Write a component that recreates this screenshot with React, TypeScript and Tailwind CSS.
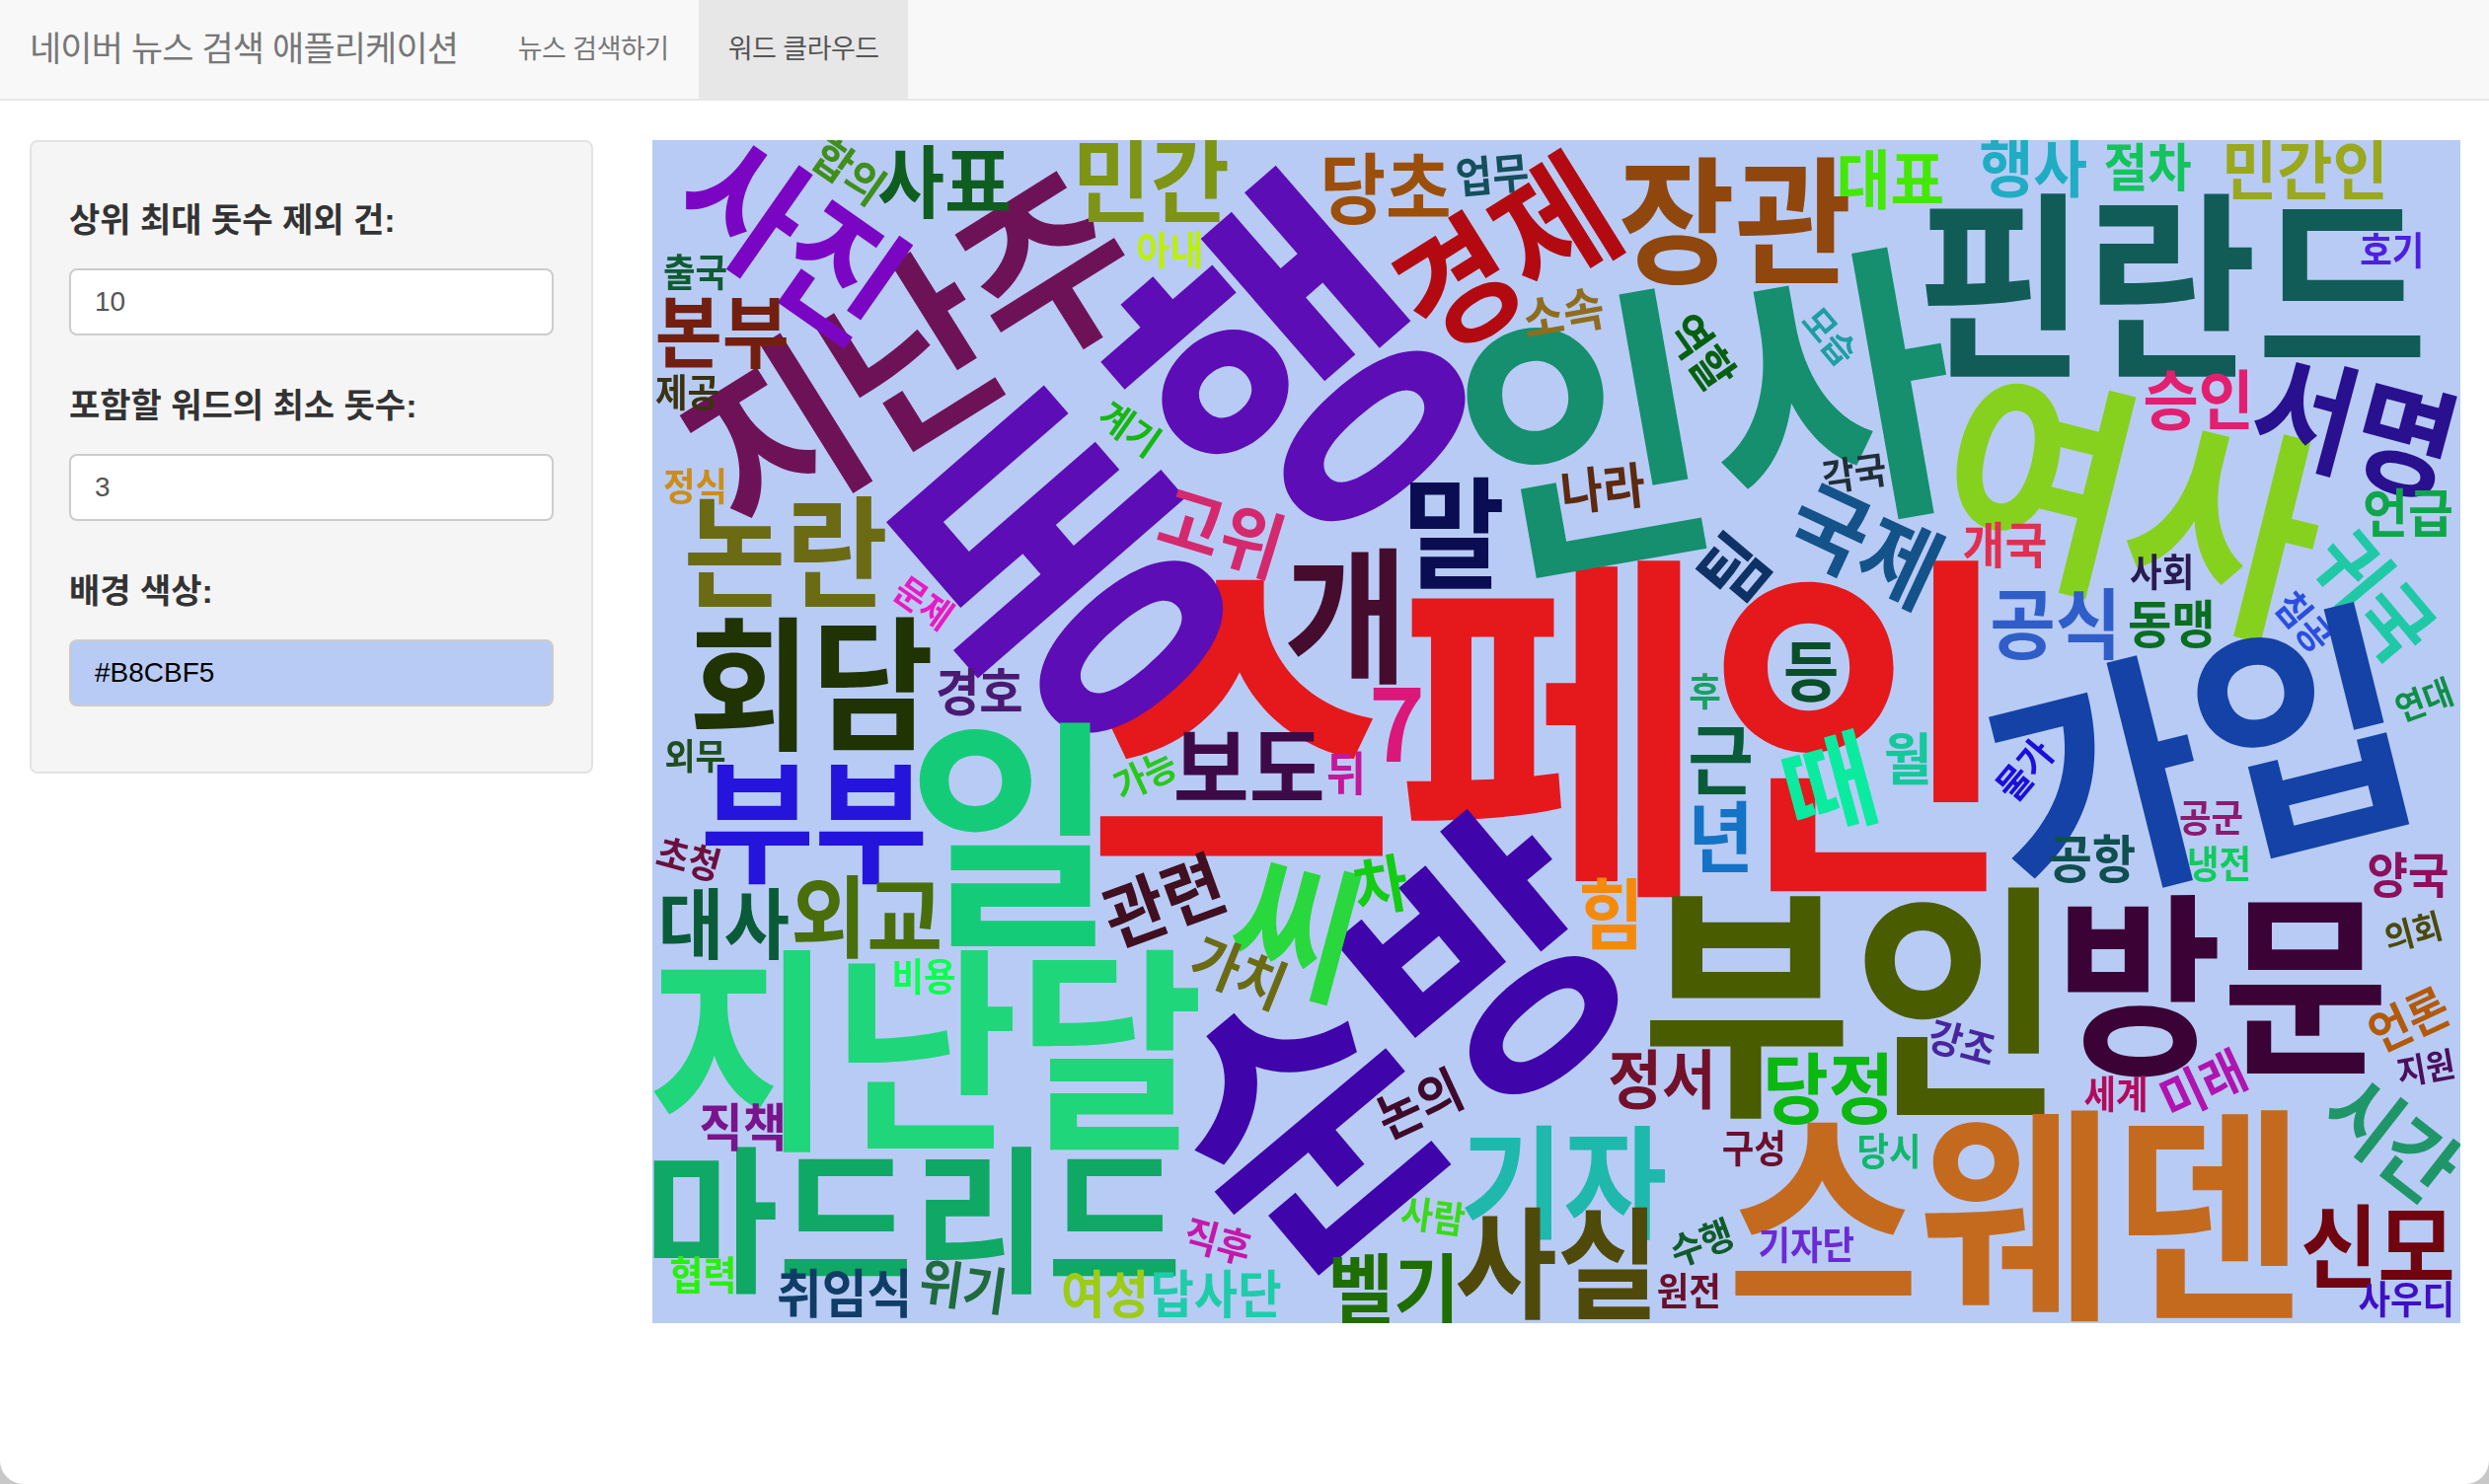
const k = 1.6084;

type Word = [string, number, number, number, number, string];

const words: Word[] = [
  ['스페인', 977, 456, 212, 0, '#e5181c'],
  ['동행', 740, 293, 207, -41, '#5c0db5'],
  ['인사', 1075, 260, 170, -10, '#158f6e'],
  ['핀란드', 1368, 179, 117, 0, '#115c57'],
  ['여사', 1343, 316, 131, 14, '#86d11e'],
  ['지난주', 573, 222, 110, -32, '#6e1257'],
  ['사진', 500, 149, 80, 35, '#7a06c4'],
  ['합의', 535, 108, 26, 35, '#3f8f1a'],
  ['사표', 595, 114, 46, 0, '#0f5e1f'],
  ['민간', 725, 113, 54, 0, '#7d9414'],
  ['당초', 873, 119, 45, 0, '#9c4f0a'],
  ['업무', 940, 110, 25, -5, '#144f5c'],
  ['경제', 948, 160, 78, -32, '#b30a12'],
  ['장관', 1093, 138, 80, 0, '#8f470d'],
  ['대표', 1191, 113, 37, 0, '#44e806'],
  ['행사', 1281, 106, 37, 0, '#20adc4'],
  ['절차', 1353, 105, 30, 0, '#12c45c'],
  ['민간인', 1452, 107, 38, 0, '#9aa81c'],
  ['호기', 1507, 157, 22, 0, '#4d1fe0'],
  ['아내', 737, 157, 23, 0, '#bcef0a'],
  ['출국', 438, 171, 22, 0, '#0f5c33'],
  ['본부', 455, 208, 46, 0, '#731f0f'],
  ['제공', 433, 247, 22, 0, '#3b3310'],
  ['소속', 985, 197, 28, -10, '#8f6d1c'],
  ['역할', 1072, 222, 27, 55, '#06600f'],
  ['모습', 1153, 212, 21, 50, '#1f9ea0'],
  ['승인', 1385, 252, 38, 0, '#e31f70'],
  ['서명', 1484, 268, 70, 15, '#28108f'],
  ['언급', 1517, 323, 31, 0, '#0fa64a'],
  ['귀국', 1495, 375, 47, 50, '#1fc9a6'],
  ['개국', 1263, 343, 29, 0, '#e03050'],
  ['각국', 1168, 298, 22, -8, '#1f2e38'],
  ['나라', 1010, 308, 29, -6, '#5c2a0f'],
  ['국제', 1175, 343, 53, 25, '#14528a'],
  ['팀', 1092, 358, 42, -50, '#0e3266'],
  ['사회', 1362, 360, 22, 0, '#291a52'],
  ['공식', 1295, 393, 45, 0, '#2f5ec9'],
  ['동맹', 1368, 393, 30, 0, '#0a6e20'],
  ['침공', 1452, 392, 22, 50, '#2a4ee0'],
  ['연대', 1527, 441, 20, -20, '#0f8f45'],
  ['가입', 1385, 477, 146, -14, '#1442a6'],
  ['등', 1141, 423, 38, 0, '#0a4f2a'],
  ['후', 1074, 435, 22, 0, '#199f64'],
  ['말', 916, 335, 70, 0, '#0a0d52'],
  ['개', 848, 387, 85, 0, '#450c2d'],
  ['고위', 770, 335, 43, 17, '#d42a6d'],
  ['계기', 712, 270, 22, 35, '#14b80e'],
  ['정식', 438, 306, 22, 0, '#cc8d1a'],
  ['논란', 495, 347, 70, 0, '#6b6b14'],
  ['문제', 582, 380, 21, 35, '#e81ac4'],
  ['회담', 511, 430, 84, 0, '#1f3303'],
  ['경호', 617, 436, 30, 0, '#4a1a73'],
  ['7', 880, 455, 60, 0, '#d9187a'],
  ['외무', 438, 476, 21, 0, '#1f4d1f'],
  ['부부', 513, 517, 78, 0, '#2414dc'],
  ['일', 637, 525, 142, 0, '#14cc78'],
  ['보도', 787, 483, 52, 0, '#3d0a47'],
  ['뒤', 848, 487, 27, 0, '#c4189a'],
  ['가능', 721, 488, 22, -25, '#28c81a'],
  ['근', 1084, 478, 45, 0, '#0a5c38'],
  ['년', 1084, 527, 45, 0, '#1473c4'],
  ['때', 1152, 494, 62, -15, '#0aeb9f'],
  ['월', 1202, 477, 33, 0, '#14c89a'],
  ['물가', 1275, 485, 22, -50, '#1a0fdc'],
  ['공군', 1393, 515, 22, 0, '#8c1a6e'],
  ['냉전', 1398, 544, 22, 0, '#0fcc5c'],
  ['공항', 1318, 541, 30, 0, '#0f4f4f'],
  ['양국', 1517, 551, 28, 0, '#8c0f5c'],
  ['의회', 1520, 587, 20, -15, '#4a4a0a'],
  ['언론', 1517, 642, 28, -25, '#b35a0a'],
  ['지원', 1528, 673, 20, -10, '#4a0f5c'],
  ['방문', 1400, 620, 114, 0, '#3b0335'],
  ['부인', 1167, 630, 145, 0, '#4a5c00'],
  ['힘', 1015, 576, 45, 0, '#f58a0a'],
  ['순방', 878, 655, 168, -40, '#3f05ab'],
  ['씨', 817, 583, 85, 15, '#28d83c'],
  ['차', 870, 558, 37, -10, '#14cc14'],
  ['관련', 733, 567, 42, -20, '#400f20'],
  ['가치', 781, 612, 33, 22, '#6b6b14'],
  ['대사', 456, 582, 45, 0, '#0a5c38'],
  ['외교', 546, 577, 52, 0, '#4a6e0a'],
  ['초청', 434, 541, 22, 15, '#6b0f3d'],
  ['비용', 582, 615, 22, 0, '#0aff50'],
  ['지난달', 583, 660, 127, 0, '#1fd67a'],
  ['마드리드', 575, 768, 92, 0, '#0fa864'],
  ['직책', 468, 710, 30, 0, '#7a148c'],
  ['협력', 443, 803, 23, 0, '#28f00a'],
  ['취임식', 532, 815, 31, 0, '#0f3d66'],
  ['위기', 607, 810, 30, 8, '#1f6b3d'],
  ['여성', 696, 815, 30, 0, '#9dcc14'],
  ['답사단', 766, 815, 30, 0, '#1fccaa'],
  ['직후', 767, 782, 23, 15, '#c418aa'],
  ['사람', 903, 766, 22, 8, '#3cd81a'],
  ['논의', 894, 695, 30, -25, '#3f0a2a'],
  ['정서', 1047, 680, 37, 0, '#73102a'],
  ['당정', 1152, 686, 45, 0, '#0ab80f'],
  ['강조', 1236, 657, 23, 15, '#47269e'],
  ['세계', 1333, 689, 22, 0, '#b30a5c'],
  ['미래', 1388, 683, 30, -25, '#b014b0'],
  ['시간', 1507, 717, 48, 38, '#1f9668'],
  ['기자', 985, 745, 71, 0, '#1fb8ad'],
  ['사실', 981, 795, 70, 0, '#4f4a0a'],
  ['벨기', 878, 812, 45, 0, '#1f6e00'],
  ['구성', 1105, 723, 22, 0, '#6b0f2a'],
  ['당시', 1190, 725, 22, 0, '#0fb86b'],
  ['스웨덴', 1270, 764, 132, 0, '#c46a1f'],
  ['신모', 1498, 785, 53, 0, '#70040f'],
  ['사우디', 1516, 818, 22, 0, '#3f0fc4'],
  ['기자단', 1138, 784, 22, 0, '#6b2ad4'],
  ['수행', 1072, 783, 22, -20, '#0f5c2a'],
  ['원전', 1064, 813, 22, 0, '#6b0f2a'],
];

const FONT = 'font-["Helvetica_Neue","Liberation_Sans","Noto_Sans_CJK_KR",sans-serif]';

function Field({ label, value, tinted }: { label: string; value: string; tinted?: boolean }) {
  return (
    <div className="mb-[51px]">
      <div className="mb-[29px] text-[34px] leading-[40px] font-semibold text-[#333]">{label}</div>
      <div
        className={
          tinted
            ? 'flex h-[68px] items-center rounded-[8px] border-2 border-[#ccc] bg-[#b8cbf5] px-[24px] text-[28px] text-black'
            : 'flex h-[68px] items-center rounded-[8px] border-2 border-[#ccc] bg-white px-[24px] text-[28px] text-[#555]'
        }
      >
        {value}
      </div>
    </div>
  );
}

export default function App() {
  return (
    <div className={`h-[1504px] w-[2522px] overflow-hidden bg-[#c8c8c8] ${FONT}`}>
      <div className="flex h-full flex-col rounded-b-[24px] bg-white">
        <nav className="flex h-[102px] shrink-0 border-b-2 border-[#e7e7e7] bg-[#f8f8f8]">
          <div className="flex items-center pl-[30px] pr-[30px] text-[35px] text-[#777] tracking-[-0.85px]">네이버 뉴스 검색 애플리케이션</div>
          <div className="flex w-[214px] items-center justify-center text-[27px] text-[#777] tracking-[-0.5px]">뉴스 검색하기</div>
          <div className="flex w-[212px] items-center justify-center bg-[#e7e7e7] text-[27px] text-[#555] tracking-[-0.5px]">워드 클라우드</div>
        </nav>
        <main className="flex items-start pt-[40px]">
          <aside className="ml-[30px] h-[642px] w-[571px] shrink-0 rounded-[8px] border-2 border-[#e3e3e3] bg-[#f5f5f5] px-[38px] pt-[59px]">
            <Field label="상위 최대 돗수 제외 건:" value="10" />
            <Field label="포함할 워드의 최소 돗수:" value="3" />
            <Field label="배경 색상:" value="#B8CBF5" tinted />
          </aside>
          <div className='relative ml-[60px] h-[1199px] w-[1832px] shrink-0 overflow-hidden bg-[#b8cbf5] font-["Noto_Sans_CJK_KR",sans-serif] font-bold blur-[0.5px]'>
            {words.map(([t, x, y, em, r, c]) => (
              <span
                key={t + x}
                className="absolute whitespace-nowrap leading-none"
                style={{
                  left: x * k - 661,
                  top: y * k - 142,
                  fontSize: em * k,
                  color: c,
                  transform: `translate(-50%, -50%) rotate(${r}deg) translateY(-0.05em) scale(1, 1.08)`,
                }}
              >
                {t}
              </span>
            ))}
          </div>
        </main>
      </div>
    </div>
  );
}
